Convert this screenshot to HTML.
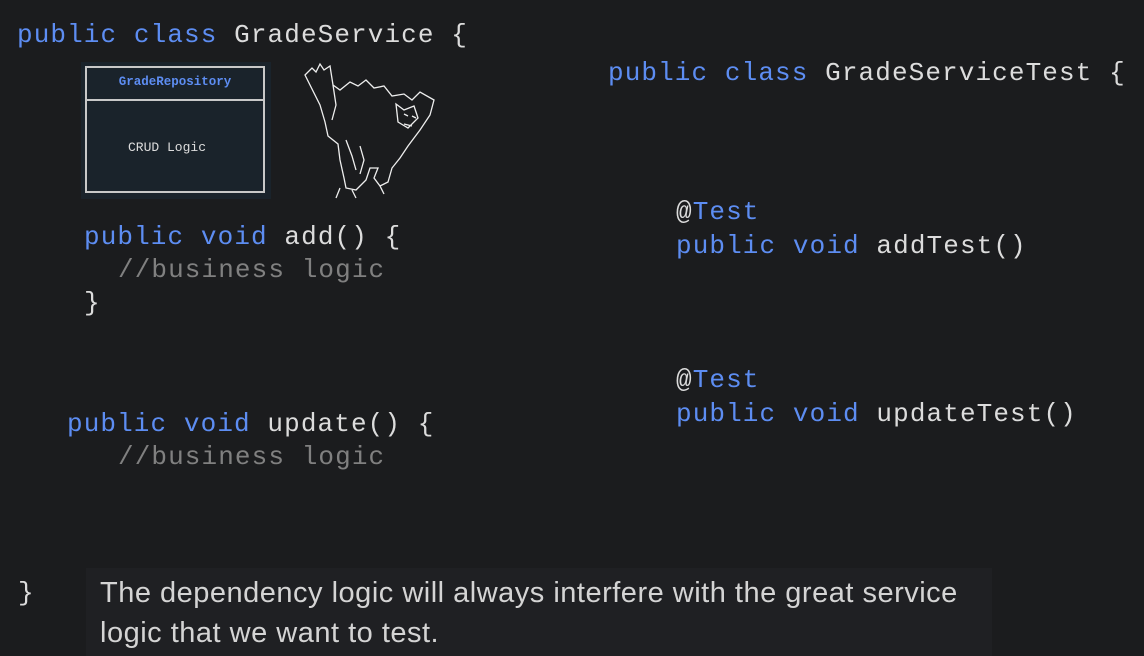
<!DOCTYPE html>
<html><head><meta charset="utf-8"><style>
html,body{margin:0;padding:0}
body{width:1144px;height:656px;background:#1b1c1e;position:relative;overflow:hidden;font-family:"Liberation Mono",monospace}
.c{position:absolute;font-size:26px;letter-spacing:1.1px;color:#dcdcdc;white-space:pre;line-height:30px}
.k{color:#5d8df2}
.g{color:#808080}
.box{position:absolute;left:81px;top:62px;width:190px;height:137px;background:#1a232b}
.in{position:absolute;left:4px;top:4px;width:180px;height:127px;border:2px solid #c8c8c8;box-sizing:border-box}
.hd{height:31px;border-bottom:2px solid #c8c8c8;color:#5d8df2;font-weight:bold;font-size:12.5px;text-align:center;line-height:28px}
.cr{position:absolute;left:41px;top:72px;font-size:13px;color:#ddd}
.cap{position:absolute;left:86px;top:568px;width:906px;height:88px;background:#1f2023}
.ct{position:absolute;left:100px;font-family:"Liberation Sans",sans-serif;font-size:29px;color:#d4d4d4;white-space:pre;letter-spacing:0.5px}
</style></head><body>
<div class="c" style="left:17px;top:20px"><span class="k">public class</span> GradeService {</div>
<div class="box"><div class="in"><div class="hd">GradeRepository</div><div class="cr">CRUD Logic</div></div></div>
<svg style="position:absolute;left:300px;top:60px" width="140" height="140" viewBox="0 0 140 140" fill="none" stroke="#eee" stroke-width="1.3">
<path d="M5 15 L12 8 L16 12 L20 4 L24 10 L30 6 L33 25 L40 30 L50 22 L58 26 L66 20 L74 28 L84 26 L92 36 L104 34 L112 40 L120 32 L134 40 L130 55 L120 70 L108 86 L100 98 L92 108 L88 122 L80 126 L74 118 L78 108 L70 108 L66 120 L56 130 L46 128 L44 118 L40 100 L38 84 L28 76 L25 62 L20 45 Z"/>
<path d="M33 25 L36 45 L32 60"/>
<path d="M96 44 L104 50 L114 46 L118 58 L108 68 L98 62 Z"/>
<path d="M104 54 L108 56 M112 56 L116 58 M104 64 L112 66"/>
<path d="M46 80 L52 96 L56 110 M60 86 L64 100 L60 114"/>
<path d="M40 128 L36 138 M52 130 L56 138 M80 126 L84 134"/>
</svg>
<div class="c" style="left:84px;top:222px"><span class="k">public void</span> add() {</div>
<div class="c g" style="left:118px;top:255px">//business logic</div>
<div class="c" style="left:84px;top:288px">}</div>
<div class="c" style="left:67px;top:409px"><span class="k">public void</span> update() {</div>
<div class="c g" style="left:118px;top:442px">//business logic</div>
<div class="c" style="left:608px;top:58px"><span class="k">public class</span> GradeServiceTest {</div>
<div class="c" style="left:676px;top:197px">@<span class="k">Test</span></div>
<div class="c" style="left:676px;top:231px"><span class="k">public void</span> addTest()</div>
<div class="c" style="left:676px;top:365px">@<span class="k">Test</span></div>
<div class="c" style="left:676px;top:399px"><span class="k">public void</span> updateTest()</div>
<div class="c" style="left:18px;top:578px">}</div>
<div class="cap"></div>
<div class="ct" style="top:577px">The dependency logic will always interfere with the great service</div>
<div class="ct" style="top:617px">logic that we want to test.</div>
</body></html>
